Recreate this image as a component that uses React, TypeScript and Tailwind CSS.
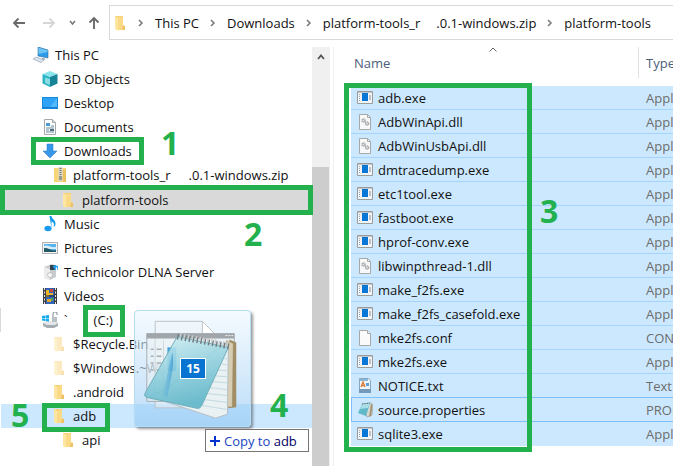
import type { ReactNode } from "react";

type IconName =
  | "pc" | "cube" | "desktop" | "document" | "download" | "zip" | "folder" | "music"
  | "picture" | "server" | "video" | "drive" | "exe" | "dll" | "blank" | "text" | "notepad";

const shapes: Record<IconName, ReactNode> = {
  pc: (
    <>
      <path d="M5 0l10 3v8L5 9z" fill="#2f9be8" />
      <path d="M5 0l10 3v2L5 7z" fill="#6cc4f5" />
      <path d="M5 0l10 3v8L5 9z" fill="none" stroke="#2b6f9f" strokeWidth=".6" />
      <path d="M9 11l3 .6v1.400L9 12.500z" fill="#98a5ae" />
      <path d="M0 12l3-2 8 3-3 2.500z" fill="#dce6ee" stroke="#93a4b3" strokeWidth=".7" />
    </>
  ),
  cube: (
    <>
      <path d="M8 0l7.500 3L8 6 .5 3z" fill="#8be4ea" />
      <path d="M.5 3L8 6v10l-7.500-3.500z" fill="#2cb5c4" />
      <path d="M15.500 3L8 6v10l7.500-3.500z" fill="#168396" />
      <path d="M3 6.500L8 8v6l-5-2z" fill="#bdf1f3" opacity=".65" />
    </>
  ),
  desktop: (
    <>
      <path d="M0 2h16v12H0z" fill="#148be3" />
      <path d="M1 3h14v9H1z" fill="#2ea3f5" />
      <path d="M8 12L15 3v9z" fill="#53b8fa" />
      <path d="M1 12.500h14" stroke="#1676c2" strokeDasharray="2 1" />
    </>
  ),
  document: (
    <>
      <path d="M2.500.5h8l3 3v12h-11z" fill="#fff" stroke="#a3a9ad" />
      <path d="M10.500.5v3h3" fill="#ddd" stroke="#a3a9ad" />
      <path d="M4 4h4v3H4z" fill="#4c9bd6" />
      <path d="M4 9h8M4 11h3M4 13h8M9 7h3" stroke="#6c8ea8" />
      <path d="M8 10h4v2H8z" fill="#536d7b" />
    </>
  ),
  download: <path d="M5 1h6v7h4l-7 7-7-7h4z" fill="#3897e8" stroke="#2679c7" strokeWidth=".5" />,
  zip: (
    <>
      <path d="M3 1h12v14H3z" fill="#f7d67a" />
      <path d="M12 3h3v12h-3z" fill="#edc25c" />
      <path d="M7.500 0h4v14h-4z" fill="#d9d9d3" />
      <path d="M9.500 1v9" stroke="#77756c" strokeWidth="2" strokeDasharray="1 1" />
      <path d="M8 9h3v4H8z" fill="#9b998d" />
    </>
  ),
  folder: (
    <>
      <path d="M3 1h8v9l2 1v4H6z" fill="#f7d177" />
      <path d="M3 1l3 2v13l-3-2z" fill="#ffe6a0" />
      <path d="M6 2h5v9l-1 4H6z" fill="#fad987" />
      <path d="M11 11h2v4h-3z" fill="#eec263" />
    </>
  ),
  music: (
    <>
      <path d="M7.500 0h2c0 3 4.500 4 4 8 0 1-1 2.500-2 3 1-3 .5-4.500-2-5.500V12z" fill="#109aee" />
      <ellipse cx="6" cy="12.500" rx="3.600" ry="2.800" fill="#169bf0" />
    </>
  ),
  picture: (
    <>
      <path d="M.5 2.500h15v11H.5z" fill="#f5f5f5" stroke="#aeb2b5" />
      <path d="M2 4h12v8H2z" fill="#59b4ec" />
      <path d="M2 6c4-2 6 2 12 1v2H2z" fill="#d8effb" />
      <path d="M2 8c4 0 5 1 8 2s3 0 4 0v2H2z" fill="#225b67" />
    </>
  ),
  server: (
    <>
      <path d="M2 3l8-3 4 2v11l-6 3-6-2z" fill="#c9ccce" />
      <path d="M2 3l6 2v11l-6-2z" fill="#ececec" />
      <path d="M8 1h5v5H8z" fill="#36454e" />
      <path d="M11 3l2-1v4m0-4l3 1v3" fill="none" stroke="#169bf0" strokeWidth="1.500" />
      <circle cx="8" cy="11" r="2.500" fill="#f8f8f8" stroke="#999" strokeWidth=".5" />
    </>
  ),
  video: (
    <>
      <path d="M1 0h14v16H1z" fill="#383d46" />
      <path d="M4 0h8v16H4z" fill="#3166bc" />
      <path d="M2.500 0v16M13.500 0v16" stroke="#e6e6e6" strokeDasharray="2 1.500" />
      <path d="M4 2h3v3h4v2H7v2H4z" fill="#ecb52c" />
      <path d="M8 1h3v3H8z" fill="#d14836" />
      <path d="M4 8h8" stroke="#222" />
      <path d="M5 11h4v3H5z" fill="#e0a829" />
      <path d="M9 10h2v3H9z" fill="#57a64f" />
    </>
  ),
  drive: (
    <>
      <path d="M1 11l4-2h8l3 2v3l-4 2H5l-4-2z" fill="#a5acb1" />
      <path d="M1 11l4-2h8l3 2-3 2H5z" fill="#e3e7e9" />
      <path d="M0 4l3-.5V6H0zm3.500-.6L7 3v3H3.500zM0 6.500h3V9l-3-.5zm3.500 0H7v3l-3.500-.4z" fill="#11aaf0" />
      <path d="M11 6V2a2 2 0 014 0v1" fill="none" stroke="#929da5" strokeWidth="1.200" />
      <path d="M10 5h5v5h-5z" fill="#b9c1c6" />
    </>
  ),
  exe: (
    <>
      <path d="M.5 1.500h15v12H.5z" fill="#f4f4f4" stroke="#9a9da0" />
      <path d="M1 2.500h14" stroke="#c2c5c7" />
      <path d="M2 4.500h1M2 6.500h1M2 8.500h1M2 10.500h1" stroke="#8eabc0" />
      <path d="M5 3h6v8H5z" fill="#0877d8" />
      <path d="M12 5h2v5h-2z" fill="#bfc2c5" />
    </>
  ),
  dll: (
    <>
      <path d="M2.500.5h8l3 3v12h-11z" fill="#f8f8f8" stroke="#a6a9ab" />
      <path d="M10.500.5v3h3" fill="none" stroke="#a6a9ab" />
      <circle cx="6.500" cy="6.500" r="1.600" fill="#ddd" stroke="#a3a8ab" strokeWidth="1.400" strokeDasharray="1.200 .4" />
      <circle cx="10" cy="9.500" r="1.600" fill="#ddd" stroke="#a3a8ab" strokeWidth="1.400" strokeDasharray="1.200 .4" />
    </>
  ),
  blank: (
    <>
      <path d="M2.500.5h8l3 3v12h-11z" fill="#fafafa" stroke="#a6a9ab" />
      <path d="M10.500.5v3h3" fill="#eee" stroke="#a6a9ab" />
    </>
  ),
  text: (
    <>
      <path d="M2.500.5h9l2 2v12h-11z" fill="#edf5fb" stroke="#86a8c2" />
      <path d="M3 1h8v2H3z" fill="#8bb6d6" />
      <path d="M4 9l2-5 2 5M5 7.500h2" fill="none" stroke="#e07931" strokeWidth="1.300" />
      <path d="M9 5h3v3H9z" fill="#5b9dd6" />
      <path d="M2 11h12v4H2z" fill="#7398b8" />
    </>
  ),
  notepad: (
    <>
      <path d="M5 2l9-1 2 2-1 10-5 2z" fill="#d7d9d4" stroke="#85979b" strokeWidth=".6" />
      <path d="M14 2l1.500 1L14 14l-2 1z" fill="#a5926b" />
      <path d="M5 2l8-1-4 13-8-3z" fill="#5fb9c9" />
      <path d="M5 2l8-1-2 5-8 1z" fill="#a9dfe6" />
      <path d="M5 2l8-1" stroke="#5c6a6e" strokeDasharray="1 .7" />
    </>
  ),
};

function Icon({ name, faded }: { name: IconName; faded?: boolean }) {
  return (
    <svg viewBox="0 0 16 16" aria-hidden="true" className={faded ? "size-4 shrink-0 opacity-50" : "size-4 shrink-0"}>
      {shapes[name]}
    </svg>
  );
}

type Node = { icon: IconName; label: string; rest?: string; level: 0 | 1 | 2 | 3; state?: "current" | "target" | "edge"; faded?: boolean };

const tree: Node[] = [
  { icon: "pc", label: "This PC", level: 0 },
  { icon: "cube", label: "3D Objects", level: 1 },
  { icon: "desktop", label: "Desktop", level: 1 },
  { icon: "document", label: "Documents", level: 1 },
  { icon: "download", label: "Downloads", level: 1 },
  { icon: "zip", label: "platform-tools_r", rest: ".0.1-windows.zip", level: 2 },
  { icon: "folder", label: "platform-tools", level: 3, state: "current" },
  { icon: "music", label: "Music", level: 1 },
  { icon: "picture", label: "Pictures", level: 1 },
  { icon: "server", label: "Technicolor DLNA Server", level: 1 },
  { icon: "video", label: "Videos", level: 1 },
  { icon: "drive", label: "`", rest: "(C:)", level: 1, state: "edge" },
  { icon: "folder", label: "$Recycle.Bin", level: 2, faded: true },
  { icon: "folder", label: "$Windows.~WS", level: 2, faded: true },
  { icon: "folder", label: ".android", level: 2 },
  { icon: "folder", label: "adb", level: 2, state: "target" },
  { icon: "folder", label: "api", level: 3 },
];

const indent = ["pl-8", "pl-[41px]", "pl-[50px]", "pl-[59px]"];
const rowState = {
  none: "h-6 border-transparent",
  current: "h-[25px] border-transparent bg-[#d9d9d9]",
  target: "h-6 border-white bg-[#cce8ff]",
  edge: "h-6 border-[#d9d9d9]",
};

const files: { icon: IconName; name: string; type: string }[] = [
  { icon: "exe", name: "adb.exe", type: "Application" },
  { icon: "dll", name: "AdbWinApi.dll", type: "Application extension" },
  { icon: "dll", name: "AdbWinUsbApi.dll", type: "Application extension" },
  { icon: "exe", name: "dmtracedump.exe", type: "Application" },
  { icon: "exe", name: "etc1tool.exe", type: "Application" },
  { icon: "exe", name: "fastboot.exe", type: "Application" },
  { icon: "exe", name: "hprof-conv.exe", type: "Application" },
  { icon: "dll", name: "libwinpthread-1.dll", type: "Application extension" },
  { icon: "exe", name: "make_f2fs.exe", type: "Application" },
  { icon: "exe", name: "make_f2fs_casefold.exe", type: "Application" },
  { icon: "blank", name: "mke2fs.conf", type: "CONF File" },
  { icon: "exe", name: "mke2fs.exe", type: "Application" },
  { icon: "text", name: "NOTICE.txt", type: "Text Document" },
  { icon: "notepad", name: "source.properties", type: "PROPERTIES File" },
  { icon: "exe", name: "sqlite3.exe", type: "Application" },
];

function Chevron() {
  return (
    <svg viewBox="0 0 6 8" aria-hidden="true" className="h-2 w-1.5 shrink-0">
      <path d="M1 1l3 3-3 3" fill="none" stroke="#777" strokeWidth="1.500" />
    </svg>
  );
}

function Toolbar() {
  return (
    <header className="flex h-[43px] items-start pl-3 pt-[5px]">
      <nav aria-label="History" className="flex h-[35px] w-[97px] shrink-0 items-center">
        <button aria-label="Back" className="w-[30px]">
          <svg viewBox="0 0 14 12" className="h-3 w-3.5"><path d="M13 6H2M6.500 1.500L2 6l4.500 4.500" fill="none" stroke="#6a6a6a" strokeWidth="1.800" /></svg>
        </button>
        <button aria-label="Forward" className="w-[27px]">
          <svg viewBox="0 0 14 12" className="h-3 w-3.5"><path d="M1 6h11M7.500 1.500L12 6l-4.500 4.500" fill="none" stroke="#d6d6d6" strokeWidth="1.800" /></svg>
        </button>
        <button aria-label="Recent locations" className="w-[19px]">
          <svg viewBox="0 0 7 6" className="h-1.5 w-[7px]"><path d="M1 1l2.500 3L6 1" fill="none" stroke="#777" strokeWidth="1.500" /></svg>
        </button>
        <button aria-label="Up" className="w-3">
          <svg viewBox="0 0 12 14" className="h-3.5 w-3"><path d="M6 13V2M1.500 6.500L6 2l4.500 4.500" fill="none" stroke="#6a6a6a" strokeWidth="1.900" /></svg>
        </button>
      </nav>
      <nav aria-label="Address" className="flex h-[35px] min-w-0 flex-1 items-center overflow-hidden whitespace-nowrap border border-r-0 border-[#d9d9d9] pl-0.5">
        <Icon name="folder" />
        <span className="w-2.5 shrink-0" />
        <Chevron />
        <button className="mx-[11px]">This PC</button>
        <Chevron />
        <button className="mx-[11px]">Downloads</button>
        <Chevron />
        <button className="mx-[11px] flex gap-4"><span>platform-tools_r</span><span>.0.1-windows.zip</span></button>
        <Chevron />
        <button className="ml-[11px]">platform-tools</button>
      </nav>
    </header>
  );
}

function Tree() {
  return (
    <ul className="w-[312px] shrink-0">
      {tree.map((n) => (
        <li key={n.label}>
          <button className={`flex w-full items-center gap-1.5 whitespace-nowrap border-l ${indent[n.level]} ${rowState[n.state ?? "none"]}`}>
            <Icon name={n.icon} faded={n.faded} />
            <span>{n.label}</span>
            {n.rest && <span className={n.icon === "drive" ? "ml-5" : "ml-3"}>{n.rest}</span>}
          </button>
        </li>
      ))}
    </ul>
  );
}

function FileList() {
  return (
    <section className="min-w-0 flex-1 overflow-hidden pl-[17px] pt-1">
      <table className="w-full min-w-[420px] table-fixed border-separate border-spacing-0 text-left">
        <thead className="text-[#4c607a]">
          <tr>
            <th className="relative h-[39px] w-[288px] p-0 pb-[7px] pl-[3px] font-normal">
              Name
              <svg viewBox="0 0 8 5" aria-hidden="true" className="absolute left-[138px] top-0 h-[5px] w-2">
                <path d="M.5 4.500L4 1l3.500 3.500" fill="none" stroke="#666" />
              </svg>
              <span className="absolute right-0 top-0 h-[31px] w-px bg-[#e0e0e0]" />
            </th>
            <th className="p-0 pb-[7px] pl-[7px] font-normal">Type</th>
          </tr>
        </thead>
        <tbody>
          {files.map((f, i) => {
            const line = i === 12 || i === 13 ? "border-[#7cc0fa]" : i === 14 ? "border-[#cce8ff]" : "border-[#a6d4fd]";
            return (
              <tr key={f.name} className="bg-[#cce8ff]">
                <td className={`h-6 border-b p-0 ${line} ${i === 13 ? "border-l pl-[5px]" : "pl-1.5"}`}>
                  <span className="flex items-center gap-[5px]"><Icon name={f.icon} />{f.name}</span>
                </td>
                <td className={`h-6 overflow-hidden whitespace-nowrap border-b p-0 pl-[7px] text-[#6d6d6d] ${line}`}>{f.type}</td>
              </tr>
            );
          })}
        </tbody>
      </table>
    </section>
  );
}

function DragPreview() {
  return (
    <div className="absolute left-[134px] top-[310px] size-[117px] rounded-sm border border-[#b5def5] bg-linear-to-b from-[#eef8ff]/60 to-[#8ec6f2]/60 shadow-[2px_2px_3px_#0006]">
      <svg viewBox="0 0 117 117" aria-hidden="true" className="size-full">
        <defs>
          <linearGradient id="cover" x1="0" y1="0" x2=".3" y2="1">
            <stop offset="0" stopColor="#d5f1f5" />
            <stop offset=".5" stopColor="#93d1de" />
            <stop offset="1" stopColor="#5bb4c8" />
          </linearGradient>
          <linearGradient id="shine" x1="0" y1="0" x2="1" y2="0">
            <stop offset="0" stopColor="#4fa9dc" stopOpacity=".2" />
            <stop offset="1" stopColor="#2b8cd0" />
          </linearGradient>
        </defs>
        <path d="M20.500 10.500h48l13 13v75h-61z" fill="#f1f6f8" fillOpacity=".5" stroke="#bbc3c7" />
        <path d="M68.500 10.500v13h13z" fill="#fff" stroke="#bbc3c7" />
        <path d="M12 23h89v69H12z" fill="#eef1f2" fillOpacity=".45" stroke="#a9afb2" />
        <path d="M12 23h89v5H12z" fill="#a0a6a9" />
        <path d="M92 25h2m1 0h2m1 0h2" stroke="#eee" />
        <path d="M29 30v60" stroke="#d1d7da" />
        <path d="M16 39h3m3 0h5M16 46h3m3 0h5M16 53h3m3 0h5M16 60h3m3 0h5" stroke="#a9b0b4" strokeWidth="1.500" />
        <path d="M33 37h9v24h-9z" fill="#3e9ee3" />
        <path d="M96 29l7 3v66l-8 1z" fill="#a28d65" />
        <path d="M93 30l7 3-1 65-8-1z" fill="#d7cdb3" stroke="#968761" strokeWidth=".5" />
        <path d="M91 33l4 3-1 69-12 4-67-22 20-10z" fill="#e9f1f3" stroke="#b2bfc4" />
        <path d="M90 48l4 1M88 54l6 1M85 60l9 1M82 66l12 1M79 72l15 1M76 78l18 2M73 84l21 2M70 90l24 3M67 96l26 4" stroke="#b9d2db" strokeWidth=".8" />
        <path d="M43 26l52 11-27 59q-2 4-5 3L12 88q-3-1-2-4z" fill="url(#cover)" fillOpacity=".88" stroke="#70aeba" />
        <path d="M38 42c3 16-3 31-5 45l-5-1z" fill="url(#shine)" opacity=".6" />
        <path d="M43 26l53 10" stroke="#757c80" strokeWidth="6" strokeDasharray="1.500 2.500" />
        <path d="M44 24l52 10" stroke="#c7cccf" strokeWidth="4" strokeDasharray="1.500 2.500" strokeDashoffset="2" />
      </svg>
      <span className="absolute left-[45px] top-[47px] flex h-[21px] w-[26px] items-center justify-center border border-white bg-[#0874d1] text-xs font-bold text-white">15</span>
    </div>
  );
}

function Mark({ className }: { className: string }) {
  return <div className={`pointer-events-none absolute border-[5px] border-[#22b14c] ${className}`} />;
}

function Step({ n, className }: { n: number; className: string }) {
  return <span className={`absolute text-[32px] font-bold leading-8 text-[#22b14c] ${className}`}>{n}</span>;
}

export default function App() {
  return (
    <div className="relative min-h-screen overflow-hidden bg-white font-['Open_Sans','Noto_Sans',sans-serif] text-[13px] leading-5 text-[#111]">
      <Toolbar />
      <main className="flex min-h-[423px]">
        <Tree />
        <div className="mt-1 flex w-[18px] shrink-0 flex-col bg-[#f0f0f0]">
          <button aria-label="Scroll up" className="flex h-[120px] justify-center pt-[7px]">
            <svg viewBox="0 0 8 6" className="h-1.5 w-2"><path d="M1 5l3-3.500L7 5" fill="none" stroke="#555" strokeWidth="1.800" /></svg>
          </button>
          <div className="w-[17px] flex-1 bg-[#cdcdcd]" />
        </div>
        <div className="mt-1 w-1 shrink-0 border-r border-[#f0f0f0]" />
        <FileList />
      </main>

      <Mark className="left-[31px] top-[137px] h-7 w-[113px]" />
      <Mark className="left-0 top-[185px] h-[30px] w-[313px]" />
      <Mark className="left-[83px] top-[305px] h-8 w-[42px]" />
      <Mark className="left-[42px] top-[403px] h-[29px] w-[68px]" />
      <Mark className="left-[344px] top-[83px] h-[369px] w-[188px]" />

      <DragPreview />
      <div className="absolute left-[205px] top-[429px] flex h-[23px] w-[104px] items-center gap-1 whitespace-nowrap border border-[#767676] bg-white pl-1">
        <svg viewBox="0 0 10 10" aria-hidden="true" className="size-2.5"><path d="M5 0v10M0 5h10" stroke="#0033cc" strokeWidth="2" /></svg>
        <span className="text-[#1a44c4]">Copy to <span className="text-[#000066]">adb</span></span>
      </div>

      <Step n={1} className="left-[161px] top-[127px]" />
      <Step n={2} className="left-[244px] top-[218px]" />
      <Step n={3} className="left-[540px] top-[195px]" />
      <Step n={4} className="left-[270px] top-[389px]" />
      <Step n={5} className="left-[11px] top-[399px]" />
    </div>
  );
}
